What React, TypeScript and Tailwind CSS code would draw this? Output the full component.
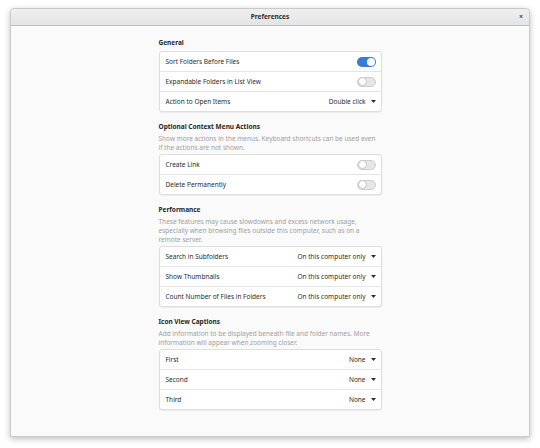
import React from "react";

const font = { fontFamily: '"Noto Sans", "DejaVu Sans", sans-serif' };

function Toggle({ on }: { on: boolean }) {
  return on ? (
    <div className="w-[19px] h-[10px] rounded-full bg-[#3a7bd5] flex items-center justify-end pr-[1px]">
      <div className="w-[8px] h-[8px] rounded-full bg-white" />
    </div>
  ) : (
    <div className="w-[19px] h-[10px] rounded-full bg-[#e6e6e6] border border-[#cdcdcd] flex items-center justify-start">
      <div className="w-[9px] h-[9px] rounded-full bg-white border border-[#c4c4c4]" />
    </div>
  );
}

function Drop({ value }: { value: string }) {
  return (
    <div className="flex items-center gap-[5px]">
      <span>{value}</span>
      <svg width="5" height="3" viewBox="0 0 5 3">
        <path d="M0 0 L5 0 L2.5 3 Z" fill="#2d2d2d" />
      </svg>
    </div>
  );
}

type Row = { label: string; toggle?: boolean; value?: string };

function Box({ rows }: { rows: Row[] }) {
  return (
    <div className="bg-white border border-[#dedede] rounded-[3px] shadow-[0_1px_1px_rgba(0,0,0,0.06)] flex flex-col">
      {rows.map((r, i) => (
        <div
          key={r.label}
          className={
            "h-[19px] flex items-center justify-between pl-[6px] pr-[5px] " +
            (i > 0 ? "border-t border-[#e4e4e4] box-content" : "")
          }
        >
          <span>{r.label}</span>
          {r.value !== undefined ? <Drop value={r.value} /> : <Toggle on={!!r.toggle} />}
        </div>
      ))}
    </div>
  );
}

function Section({
  title,
  desc,
  rows,
}: {
  title: string;
  desc?: string;
  rows: Row[];
}) {
  return (
    <div className="flex flex-col">
      <div className="font-bold leading-[10px] text-[#262626]">{title}</div>
      {desc && (
        <div className="mt-[2px] leading-[9px] text-[#9f9f9f] pr-[4px]">{desc}</div>
      )}
      <div className={desc ? "mt-[2px]" : "mt-[3px]"}>
        <Box rows={rows} />
      </div>
    </div>
  );
}

export default function App() {
  return (
    <div className="w-[540px] h-[448px] bg-white overflow-hidden" style={font}>
      <div className="ml-[10px] mt-[8px] w-[520px] h-[429px] border border-[#c9c9c9] rounded-t-[4px] bg-[#fafafa] flex flex-col shadow-[0_2px_6px_rgba(0,0,0,0.25)]">
        <div className="h-[17px] shrink-0 bg-gradient-to-b from-[#efefef] to-[#e4e4e4] border-b border-[#bdbdbd] rounded-t-[4px] flex items-center justify-center relative">
          <span className="text-[6.5px] font-bold text-[#2d2d2d]">Preferences</span>
          <span className="absolute right-[6px] top-[4px] text-[7px] leading-[7px] font-bold text-[#444]">×</span>
        </div>
        <div className="w-[223px] mx-auto pt-[12px] flex flex-col gap-[10px] text-[6.5px] text-[#2b2b2b]">
          <Section
            title="General"
            rows={[
              { label: "Sort Folders Before Files", toggle: true },
              { label: "Expandable Folders in List View", toggle: false },
              { label: "Action to Open Items", value: "Double click" },
            ]}
          />
          <Section
            title="Optional Context Menu Actions"
            desc="Show more actions in the menus. Keyboard shortcuts can be used even if the actions are not shown."
            rows={[
              { label: "Create Link", toggle: false },
              { label: "Delete Permanently", toggle: false },
            ]}
          />
          <Section
            title="Performance"
            desc="These features may cause slowdowns and excess network usage, especially when browsing files outside this computer, such as on a remote server."
            rows={[
              { label: "Search in Subfolders", value: "On this computer only" },
              { label: "Show Thumbnails", value: "On this computer only" },
              { label: "Count Number of Files in Folders", value: "On this computer only" },
            ]}
          />
          <Section
            title="Icon View Captions"
            desc="Add information to be displayed beneath file and folder names. More information will appear when zooming closer."
            rows={[
              { label: "First", value: "None" },
              { label: "Second", value: "None" },
              { label: "Third", value: "None" },
            ]}
          />
        </div>
      </div>
    </div>
  );
}
